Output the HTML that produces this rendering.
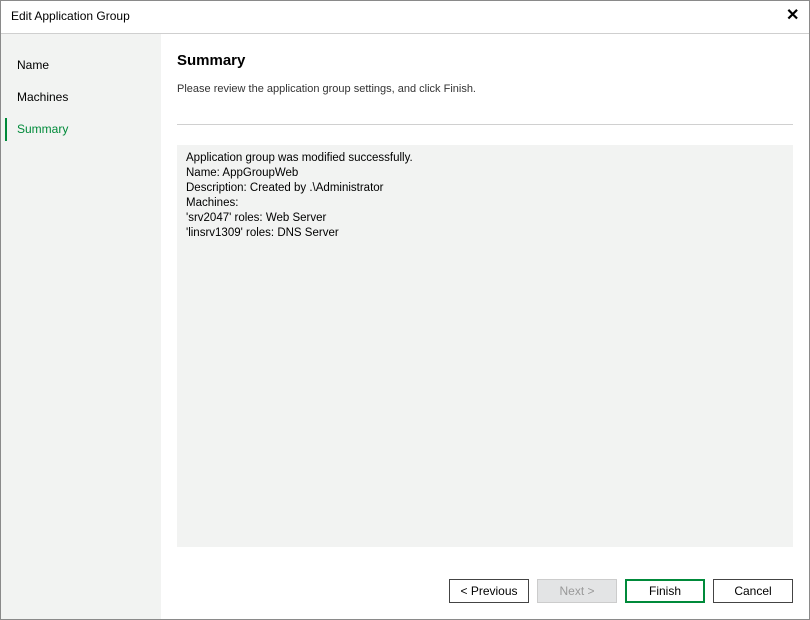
<!DOCTYPE html>
<html><head><style>
*{margin:0;padding:0;box-sizing:border-box}
body{width:810px;height:620px;background:#fff;font-family:"Segoe UI","Liberation Sans",sans-serif;font-size:12px;color:#000;position:relative;overflow:hidden}
.win{position:absolute;left:0;top:0;width:810px;height:620px;border:1px solid #8a8a8a}
.title{position:absolute;left:11px;top:9px;font-size:12px}
.x{position:absolute;left:786px;top:5px;font-size:16px;font-weight:bold}
.tl{position:absolute;left:1px;top:33px;width:808px;height:1px;background:#cfcfcf}
.side{position:absolute;left:1px;top:34px;width:160px;height:585px;background:#f2f3f2}
.nav{position:absolute;left:17px;font-size:12px}
.bar{position:absolute;left:5px;top:118px;width:2px;height:23px;background:#008a3a}
h1{position:absolute;left:177px;top:52px;font-size:15px;font-weight:bold}
.sub{position:absolute;left:177px;top:83px;color:#333;font-size:11px}
.sep{position:absolute;left:177px;top:124px;width:616px;height:1px;background:#d0d0d0}
.box{position:absolute;left:177px;top:145px;width:616px;height:402px;background:#f2f3f2;padding:6px 9px;line-height:15px;font-size:11.5px}
.btn{position:absolute;top:579px;width:80px;height:24px;border:1px solid #444;background:#fff;text-align:center;line-height:22px;font-size:12px}
</style></head><body>
<div class="win"></div>
<div class="title">Edit Application Group</div>
<div class="x">✕</div>
<div class="tl"></div>
<div class="side"></div>
<div class="nav" style="top:58px">Name</div>
<div class="nav" style="top:90px">Machines</div>
<div class="nav" style="top:122px;color:#008a3a">Summary</div>
<div class="bar"></div>
<h1>Summary</h1>
<div class="sub">Please review the application group settings, and click Finish.</div>
<div class="sep"></div>
<div class="box">Application group was modified successfully.<br>Name: AppGroupWeb<br>Description: Created by .\Administrator<br>Machines:<br>'srv2047' roles: Web Server<br>'linsrv1309' roles: DNS Server</div>
<div class="btn" style="left:449px">&lt; Previous</div>
<div class="btn" style="left:537px;background:#e3e4e5;border-color:#ccc;color:#999">Next &gt;</div>
<div class="btn" style="left:625px;border:2px solid #008a3a;line-height:20px">Finish</div>
<div class="btn" style="left:713px">Cancel</div>
</body></html>
